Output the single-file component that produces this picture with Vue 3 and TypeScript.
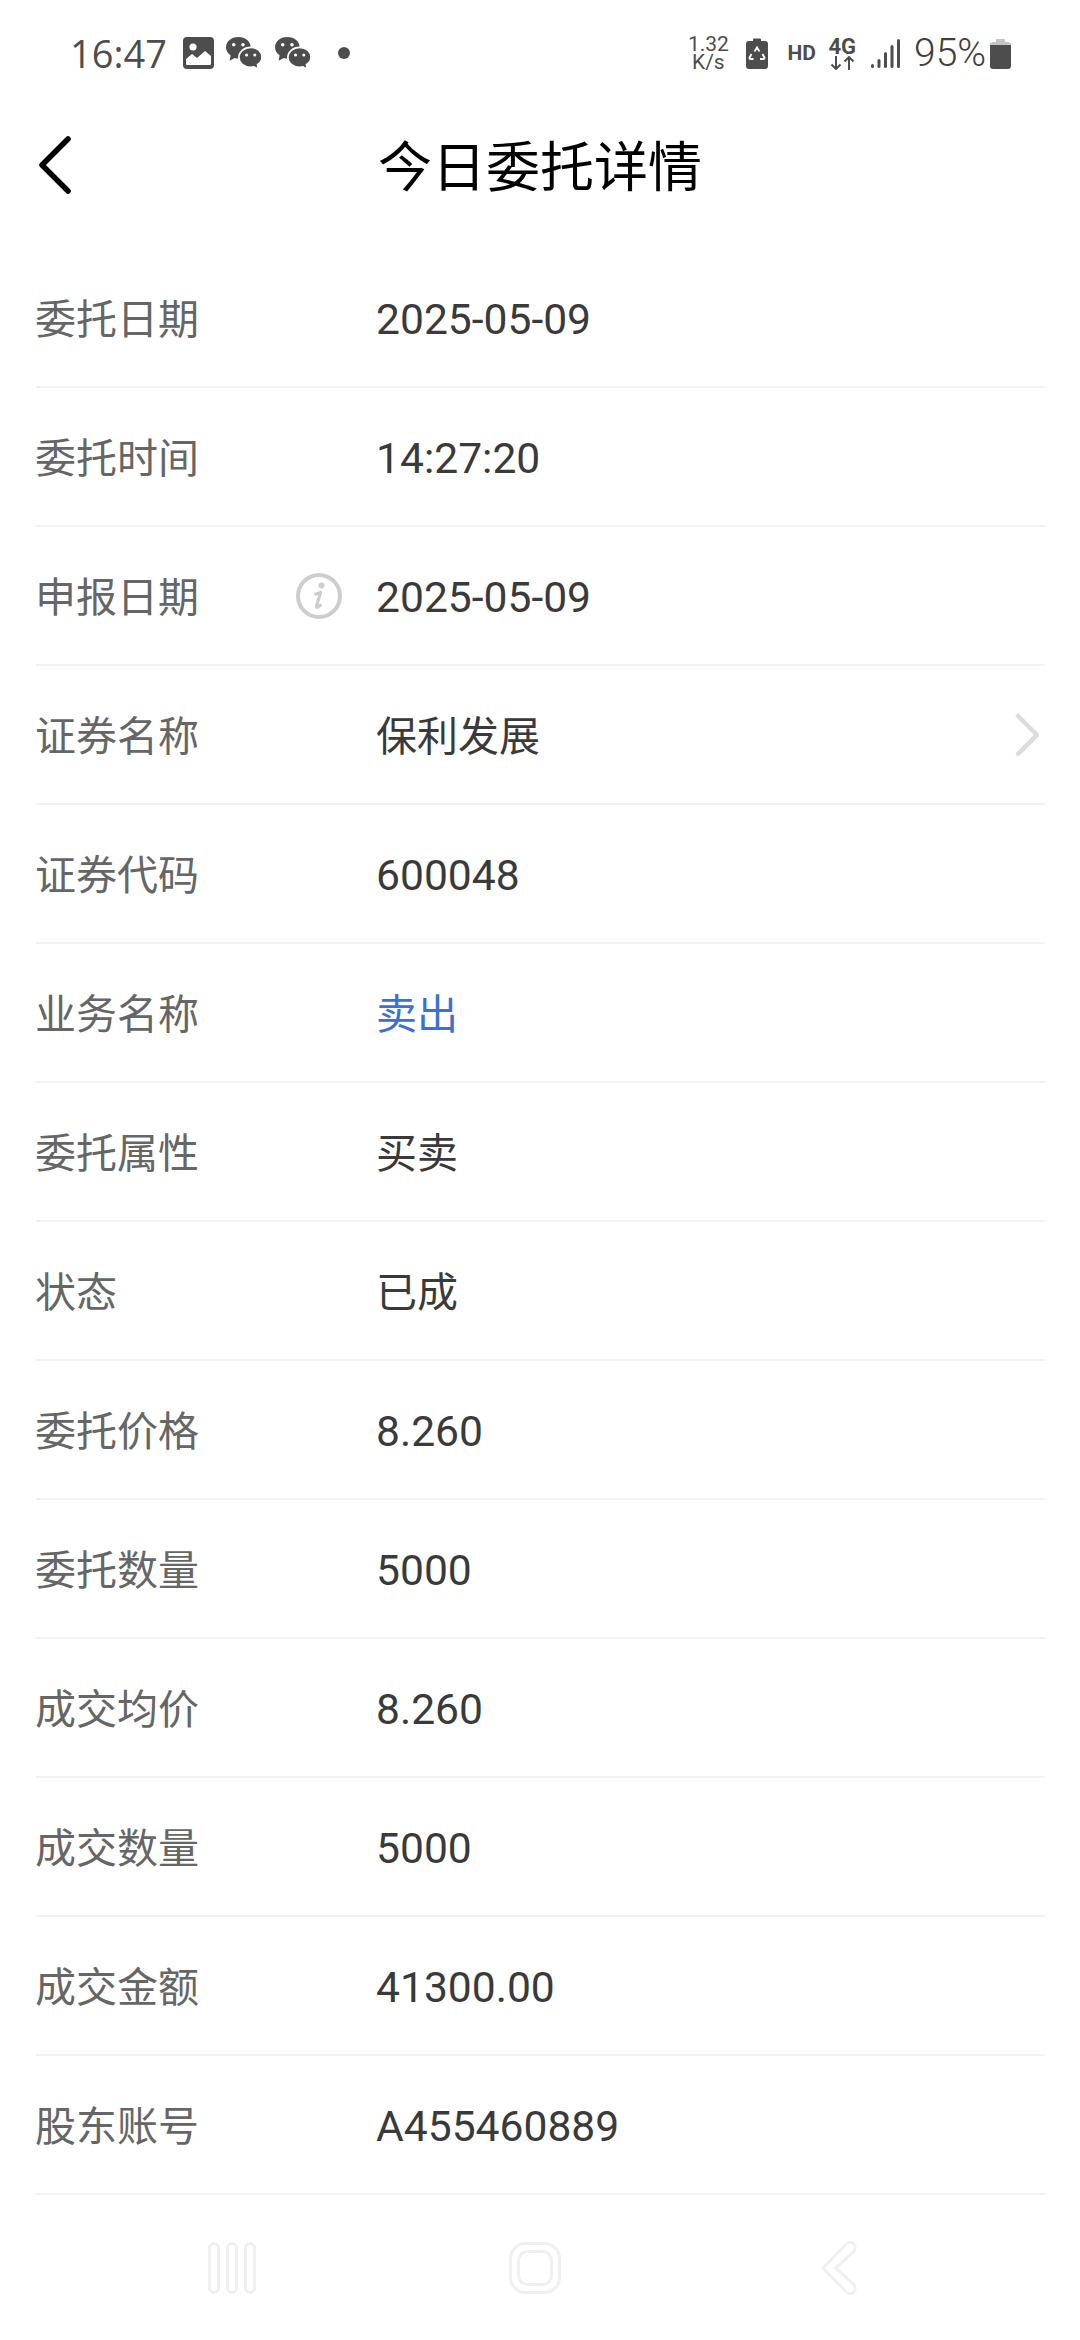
<template>
  <div class="page">
    <div class="status-bar">
      <div class="status-left">
        <span class="clock">16:47</span>
        <svg class="ic-image" viewBox="0 0 31 32" width="31" height="32">
          <rect width="31" height="32" rx="4" fill="#4d4d4d" />
          <circle cx="10" cy="10" r="3.6" fill="#fff" />
          <path d="M3 27v-5l6-5 5 4 8-7 6 5v8a1 1 0 0 1-1 1H4a1 1 0 0 1-1-1z" fill="#fff" />
        </svg>
        <svg v-for="n in 2" :key="n" class="ic-wechat" viewBox="0 0 37 33" width="38" height="34">
          <path d="M13 1C6 1 1 5.500 1 11c0 3.300 1.800 6.100 4.500 8L4.500 24l5-2.700c1.200.4 2.400.6 3.500.6 6.500 0 12-4.500 12-10.900C25 5.500 20 1 13 1z" fill="#4d4d4d" />
          <circle cx="8.500" cy="8.500" r="1.700" fill="#fff" />
          <circle cx="17.500" cy="8.500" r="1.700" fill="#fff" />
          <path d="M25 11c-6.500 0-11.500 4.300-11.500 9.700S18.500 30.400 25 30.400c1.100 0 2.200-.2 3.200-.5l4.300 2.400-.9-4.400c2.700-1.800 4.400-4.400 4.400-7.200C36 15.300 31.500 11 25 11z" fill="#4d4d4d" stroke="#fff" stroke-width="1.600" />
          <circle cx="21" cy="18.500" r="1.500" fill="#fff" />
          <circle cx="29" cy="18.500" r="1.500" fill="#fff" />
        </svg>
        <span class="dot"></span>
      </div>
      <div class="status-right">
        <div class="speed"><span>1.32</span><span>K/s</span></div>
        <svg class="ic-saver" viewBox="0 0 22 32" width="22" height="32">
          <path d="M7 2.500a1 1 0 0 1 1-1h6a1 1 0 0 1 1 1V4h4a3 3 0 0 1 3 3v22a3 3 0 0 1-3 3H3a3 3 0 0 1-3-3V7a3 3 0 0 1 3-3h4z" fill="#4d4d4d" />
          <path d="M8.500 14.500l2.500-4 2.500 4M16.500 17l1.800 3.400a1 1 0 0 1-.9 1.600h-3.400M7.500 22H4.600a1 1 0 0 1-.9-1.600L5.500 17" fill="none" stroke="#fff" stroke-width="1.800" />
        </svg>
        <span class="hd">HD</span>
        <div class="net">
          <span>4G</span>
          <svg viewBox="0 0 25 14" width="25" height="14">
            <path d="M6 0v13M1.500 8.500L6 13l4.500-4.500M19 14V1M14.500 5.500L19 1l4.500 4.500" fill="none" stroke="#4d4d4d" stroke-width="2" />
          </svg>
        </div>
        <svg class="ic-signal" viewBox="0 0 29 29" width="29" height="29">
          <rect x="0" y="25" width="3" height="4" rx="1.500" fill="#4d4d4d" />
          <rect x="6.500" y="20" width="3" height="9" rx="1.500" fill="#4d4d4d" />
          <rect x="13" y="13" width="3" height="16" rx="1.500" fill="#4d4d4d" />
          <rect x="19.500" y="6" width="3" height="23" rx="1.500" fill="#4d4d4d" />
          <rect x="26" y="0" width="3" height="29" rx="1.500" fill="#4d4d4d" />
        </svg>
        <span class="percent">95%</span>
        <svg class="ic-battery" viewBox="0 0 21 32" width="21" height="32">
          <path d="M6 3a1 1 0 0 1 1-1h7a1 1 0 0 1 1 1v2h3a3 3 0 0 1 3 3v2H0V8a3 3 0 0 1 3-3h3z" fill="#c4c4c4" />
          <path d="M0 8h21v21a3 3 0 0 1-3 3H3a3 3 0 0 1-3-3z" fill="#4d4d4d" />
        </svg>
      </div>
    </div>

    <header class="title-bar">
      <svg class="back" viewBox="0 0 34 60" width="34" height="60">
        <path d="M30 4L4 30l26 26" fill="none" stroke="#000" stroke-width="5.500" stroke-linecap="round" stroke-linejoin="round" />
      </svg>
      <h1 class="title">今日委托详情</h1>
    </header>

    <ul class="rows">
      <li v-for="row in rows" :key="row.label" class="row">
        <span class="label">{{ row.label }}</span>
        <span class="info-slot">
          <svg v-if="row.info" viewBox="0 0 46 46" width="46" height="46">
            <circle cx="23" cy="23" r="21" fill="none" stroke="#cdcdcd" stroke-width="4" />
            <circle cx="25.500" cy="12.500" r="3" fill="#cdcdcd" />
            <path d="M18.500 21.500l6-2-4 13.500c-.3 1.300.6 1.600 1.600 1l3.400-2.500" fill="none" stroke="#cdcdcd" stroke-width="3.200" stroke-linejoin="round" />
          </svg>
        </span>
        <span class="value" :class="{ 'value--link': row.link, 'value--num': row.num }">{{ row.value }}</span>
        <svg v-if="row.arrow" class="arrow" viewBox="0 0 24 44" width="24" height="44">
          <path d="M3 3l19 19L3 41" fill="none" stroke="#dcdcdc" stroke-width="4.500" stroke-linecap="round" stroke-linejoin="round" />
        </svg>
      </li>
    </ul>

    <nav class="nav-bar">
      <svg viewBox="0 0 48 52" width="48" height="52">
        <rect x="1.500" y="1.500" width="9" height="49" rx="4.500" />
        <rect x="19.500" y="1.500" width="9" height="49" rx="4.500" />
        <rect x="37.500" y="1.500" width="9" height="49" rx="4.500" />
      </svg>
      <svg class="nav-home" viewBox="0 0 52 52" width="52" height="52">
        <rect x="1.500" y="1.500" width="49" height="49" rx="15" />
        <rect x="9.500" y="9.500" width="33" height="33" rx="9" />
      </svg>
      <svg class="nav-back" viewBox="0 0 36 54" width="36" height="54">
        <path d="M2 27L26 2.500c3-2.500 8-.5 8 4 0 1.500-.5 2.500-1.500 4L15 27l17.500 16.500c1 1.500 1.500 2.500 1.500 4 0 4.500-5 6.500-8 4z" />
      </svg>
    </nav>
  </div>
</template>

<script setup lang="ts">
interface DetailRow {
  label: string;
  value: string;
  num?: boolean;
  info?: boolean;
  arrow?: boolean;
  link?: boolean;
}

const rows: DetailRow[] = [
  { label: '委托日期', value: '2025-05-09', num: true },
  { label: '委托时间', value: '14:27:20', num: true },
  { label: '申报日期', value: '2025-05-09', num: true, info: true },
  { label: '证券名称', value: '保利发展', arrow: true },
  { label: '证券代码', value: '600048', num: true },
  { label: '业务名称', value: '卖出', link: true },
  { label: '委托属性', value: '买卖' },
  { label: '状态', value: '已成' },
  { label: '委托价格', value: '8.260', num: true },
  { label: '委托数量', value: '5000', num: true },
  { label: '成交均价', value: '8.260', num: true },
  { label: '成交数量', value: '5000', num: true },
  { label: '成交金额', value: '41300.00', num: true },
  { label: '股东账号', value: 'A455460889', num: true },
];
</script>

<style>
html,
body {
  background: #fff;
}
</style>

<style scoped>
.page {
  width: 1080px;
  height: 2340px;
  overflow: hidden;
  background: #fff;
  font-family: Roboto, "Noto Sans CJK SC", sans-serif;
}

.status-bar {
  height: 106px;
  box-sizing: border-box;
  padding: 0 69px 0 70px;
  display: flex;
  align-items: center;
  justify-content: space-between;
  color: #4d4d4d;
}

.status-left,
.status-right {
  display: flex;
  align-items: center;
}

.clock {
  font-size: 38px;
  width: 113px;
  font-family: "Open Sans", sans-serif;
}

.ic-wechat {
  margin-left: 11px;
}

.dot {
  width: 12px;
  height: 12px;
  margin-left: 26px;
  border-radius: 50%;
  background: #4d4d4d;
}

.speed {
  display: flex;
  flex-direction: column;
  align-items: center;
  width: 42px;
  font-size: 21px;
  line-height: 18px;
}

.ic-saver {
  margin-left: 17px;
}

.hd {
  margin-left: 19px;
  width: 27px;
  font-size: 21px;
  font-weight: 700;
}

.net {
  display: flex;
  flex-direction: column;
  align-items: center;
  margin-left: 14px;
  font-size: 22px;
  font-weight: 700;
  line-height: 19px;
}

.ic-signal {
  margin-left: 15px;
}

.percent {
  margin-left: 14px;
  width: 76px;
  font-size: 39px;
  font-weight: 300;
  color: #404040;
}

.title-bar {
  height: 143px;
  box-sizing: border-box;
  padding: 0 38px 28px;
  display: grid;
  grid-template-columns: 1fr auto 1fr;
  align-items: center;
}

.title {
  grid-column: 2;
  margin: 0;
  font-size: 54px;
  font-weight: 400;
  color: #000;
}

.back {
  grid-column: 1;
  grid-row: 1;
  margin-top: 3px;
}

.rows {
  list-style: none;
  margin: 0;
  padding: 0 35px 0 36px;
}

.row {
  height: 139px;
  box-sizing: border-box;
  border-bottom: 2px solid #f2f2f2;
  display: flex;
  align-items: center;
  font-size: 41px;
}

.label {
  width: 261px;
  padding-bottom: 3px;
  margin-left: -1px;
  color: #666;
}

.info-slot {
  width: 80px;
  display: flex;
  align-items: center;
}

.value {
  flex: 1;
  padding-bottom: 3px;
  color: #3a3a3a;
}

.value--num {
  font-size: 42.600px;
  padding-top: 3px;
  padding-bottom: 0;
}

.value--link {
  color: #3a70d8;
}

.arrow {
  margin-right: 6px;
}

.nav-bar {
  display: flex;
  align-items: center;
  height: 145px;
  padding-left: 208px;
}

.nav-home {
  margin-left: 253px;
}

.nav-back {
  margin-left: 260px;
}

.nav-bar svg {
  fill: none;
  stroke: #f0f0f0;
  stroke-width: 3;
}
</style>
